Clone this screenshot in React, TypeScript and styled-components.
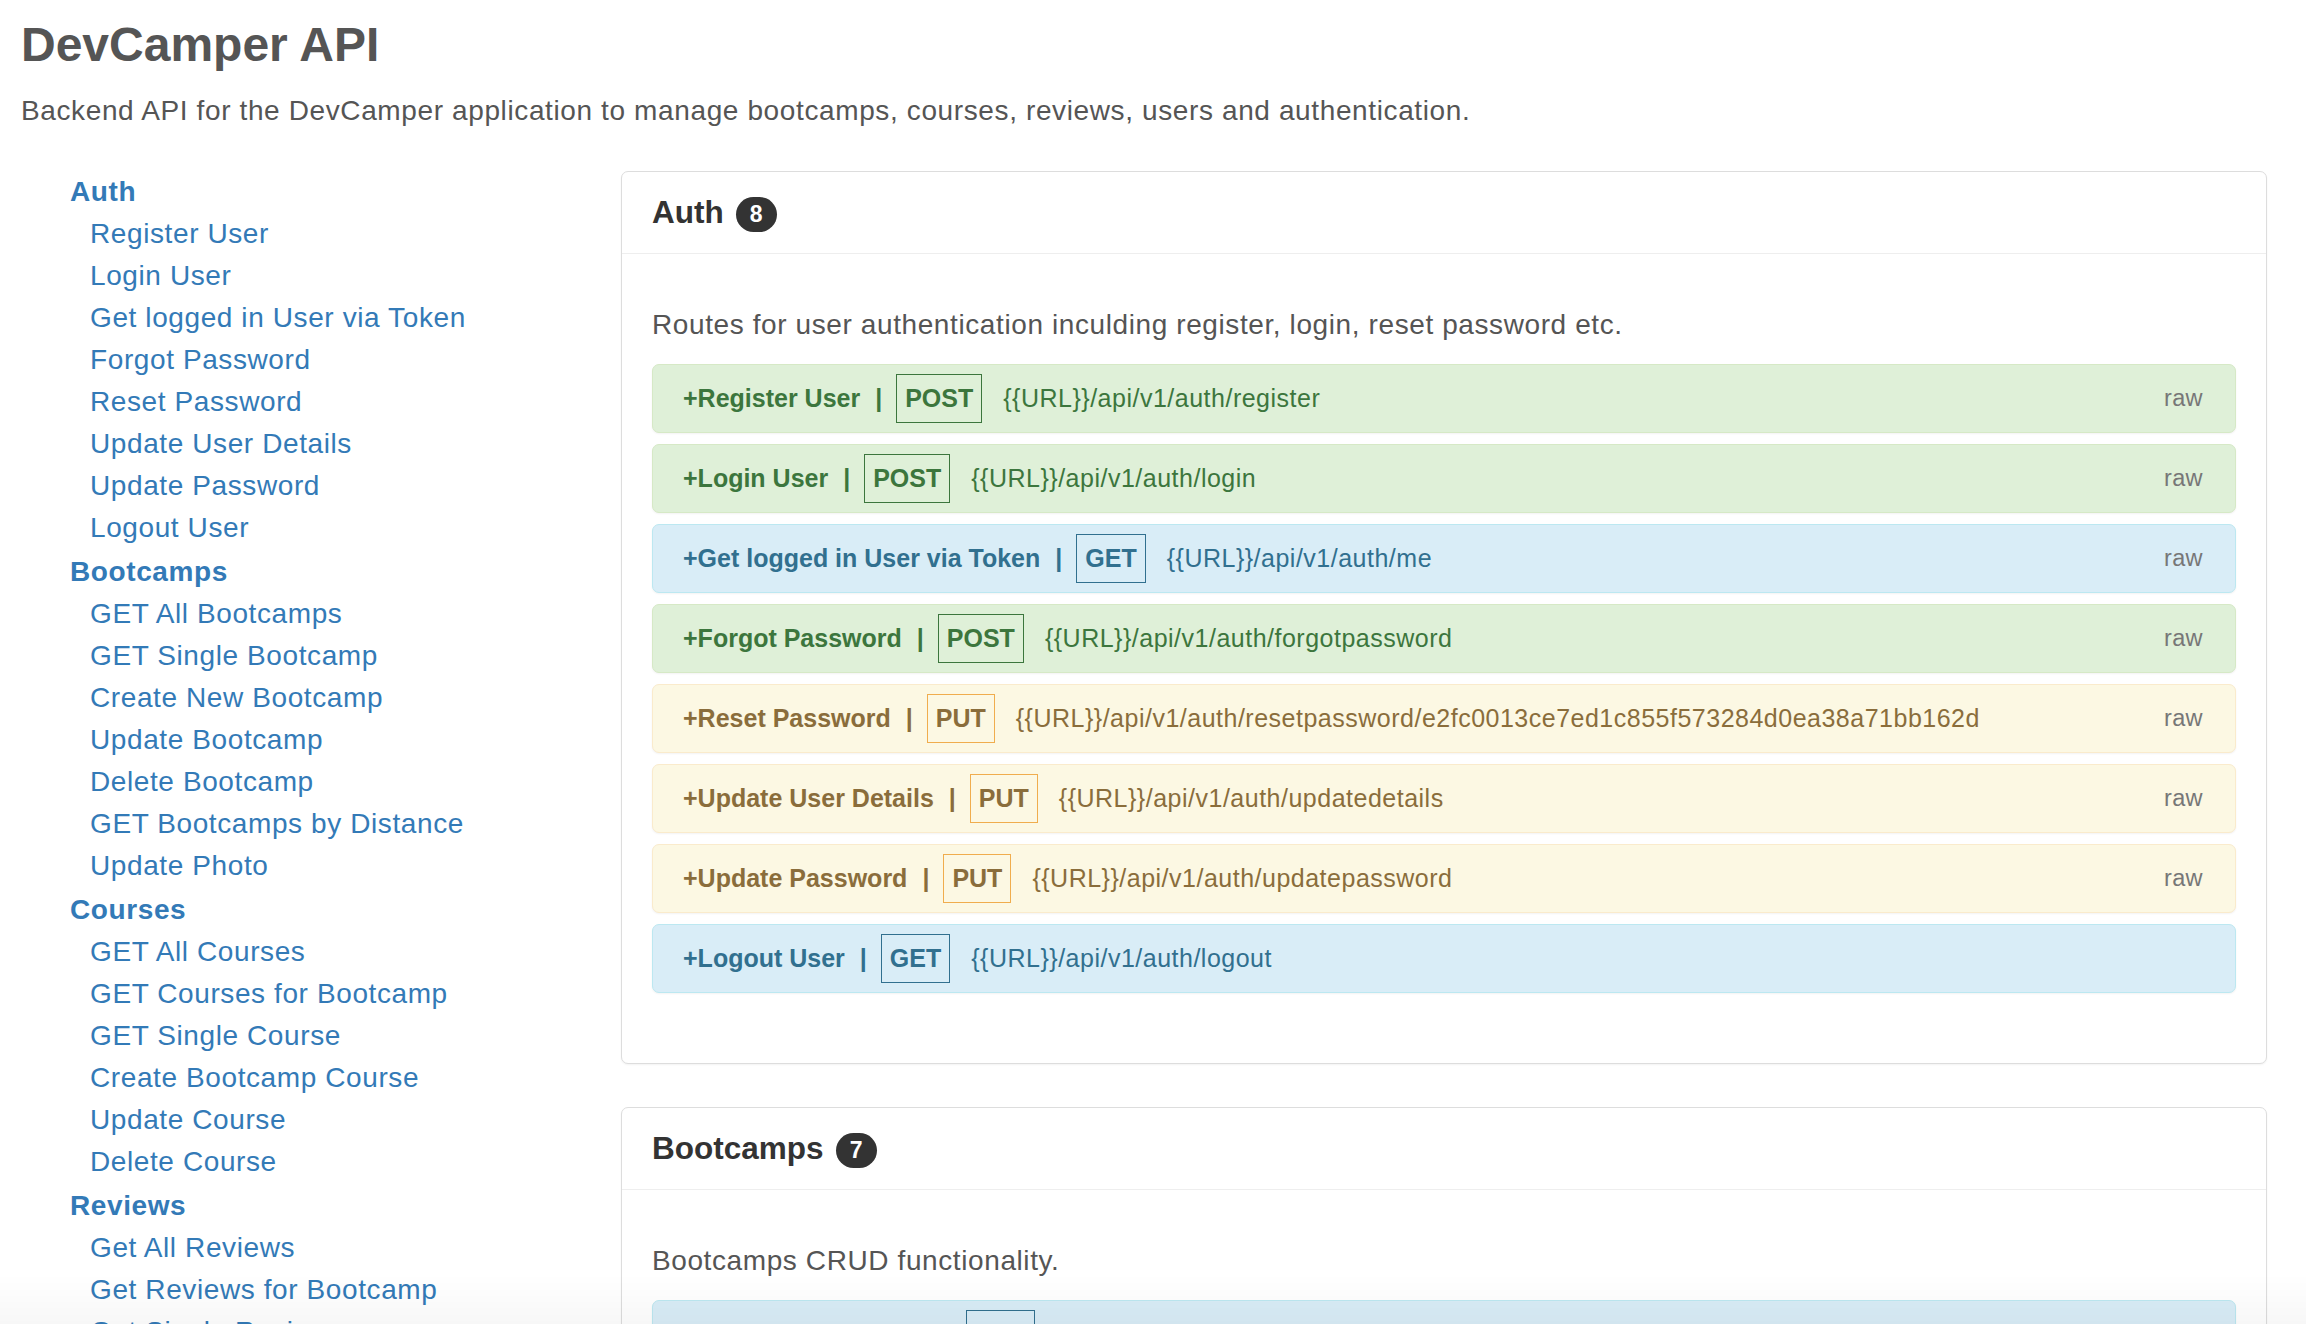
import React from 'react';
import styled, { createGlobalStyle } from 'styled-components';

type Method = 'GET' | 'POST' | 'PUT' | 'DELETE';

interface Endpoint {
  name: string;
  method: Method;
  url: string;
  raw?: boolean;
}

interface Section {
  title: string;
  description: string;
  endpoints: Endpoint[];
}

const sections: Section[] = [
  {
    title: 'Auth',
    description: 'Routes for user authentication inculding register, login, reset password etc.',
    endpoints: [
      { name: 'Register User', method: 'POST', url: '{{URL}}/api/v1/auth/register', raw: true },
      { name: 'Login User', method: 'POST', url: '{{URL}}/api/v1/auth/login', raw: true },
      { name: 'Get logged in User via Token', method: 'GET', url: '{{URL}}/api/v1/auth/me', raw: true },
      { name: 'Forgot Password', method: 'POST', url: '{{URL}}/api/v1/auth/forgotpassword', raw: true },
      {
        name: 'Reset Password',
        method: 'PUT',
        url: '{{URL}}/api/v1/auth/resetpassword/e2fc0013ce7ed1c855f573284d0ea38a71bb162d',
        raw: true,
      },
      { name: 'Update User Details', method: 'PUT', url: '{{URL}}/api/v1/auth/updatedetails', raw: true },
      { name: 'Update Password', method: 'PUT', url: '{{URL}}/api/v1/auth/updatepassword', raw: true },
      { name: 'Logout User', method: 'GET', url: '{{URL}}/api/v1/auth/logout' },
    ],
  },
  {
    title: 'Bootcamps',
    description: 'Bootcamps CRUD functionality.',
    endpoints: [
      { name: 'GET All Bootcamps', method: 'GET', url: '{{URL}}/api/v1/bootcamps' },
      { name: 'GET Single Bootcamp', method: 'GET', url: '{{URL}}/api/v1/bootcamps/5d725a1b7b292f5f8ceff788' },
      { name: 'Create New Bootcamp', method: 'POST', url: '{{URL}}/api/v1/bootcamps', raw: true },
      { name: 'Update Bootcamp', method: 'PUT', url: '{{URL}}/api/v1/bootcamps/5d725a1b7b292f5f8ceff788', raw: true },
      { name: 'Delete Bootcamp', method: 'DELETE', url: '{{URL}}/api/v1/bootcamps/5d725a1b7b292f5f8ceff788' },
      { name: 'GET Bootcamps by Distance', method: 'GET', url: '{{URL}}/api/v1/bootcamps/radius/02118/10' },
      { name: 'Update Photo', method: 'PUT', url: '{{URL}}/api/v1/bootcamps/5d725a1b7b292f5f8ceff788/photo' },
    ],
  },
];

const navGroups: { title: string; items: string[] }[] = [
  {
    title: 'Auth',
    items: [
      'Register User',
      'Login User',
      'Get logged in User via Token',
      'Forgot Password',
      'Reset Password',
      'Update User Details',
      'Update Password',
      'Logout User',
    ],
  },
  {
    title: 'Bootcamps',
    items: [
      'GET All Bootcamps',
      'GET Single Bootcamp',
      'Create New Bootcamp',
      'Update Bootcamp',
      'Delete Bootcamp',
      'GET Bootcamps by Distance',
      'Update Photo',
    ],
  },
  {
    title: 'Courses',
    items: [
      'GET All Courses',
      'GET Courses for Bootcamp',
      'GET Single Course',
      'Create Bootcamp Course',
      'Update Course',
      'Delete Course',
    ],
  },
  {
    title: 'Reviews',
    items: ['Get All Reviews', 'Get Reviews for Bootcamp', 'Get Single Review', 'Add Review', 'Update Review', 'Delete Review'],
  },
  {
    title: 'Users',
    items: ['Get All Users', 'Get Single User', 'Create User', 'Update User', 'Delete User'],
  },
];

const tones: Record<Method, { bg: string; border: string; text: string; box: string }> = {
  GET: { bg: '#d9edf7', border: '#bce8f1', text: '#31708f', box: '#31708f' },
  POST: { bg: '#dff0d8', border: '#d6e9c6', text: '#3c763d', box: '#3c763d' },
  PUT: { bg: '#fcf8e3', border: '#faebcc', text: '#8a6d3b', box: '#f0ad4e' },
  DELETE: { bg: '#f2dede', border: '#ebccd1', text: '#a94442', box: '#d9534f' },
};

const GlobalStyle = createGlobalStyle`
  html {
    overflow: hidden;
  }
  body {
    margin: 0;
    background: #fff;
    color: #333;
    font-family: "Liberation Sans", Arial, Helvetica, sans-serif;
  }
`;

const Page = styled.div`
  padding: 17px 39px 0 21px;
`;

const Title = styled.h1`
  margin: 0;
  font-size: 48px;
  line-height: 56px;
  font-weight: 700;
  color: #555;
`;

const Lead = styled.p`
  margin: 19px 0 0;
  font-size: 28px;
  letter-spacing: 0.62px;
  line-height: 37px;
  color: #555;
`;

const Layout = styled.div`
  display: grid;
  grid-template-columns: 600px minmax(0, 1fr);
  align-items: start;
  margin-top: 42px;
`;

const Nav = styled.nav`
  display: flex;
  flex-direction: column;
`;

const NavGroup = styled.div`
  display: flex;
  flex-direction: column;

  & + & {
    margin-top: 2px;
  }
`;

const NavLink = styled.a<{ $heading?: boolean }>`
  padding-left: ${({ $heading }) => ($heading ? '49px' : '69px')};
  font-size: 28px;
  letter-spacing: 0.6px;
  line-height: 42px;
  font-weight: ${({ $heading }) => ($heading ? 700 : 400)};
  color: #337ab7;
  text-decoration: none;
  white-space: nowrap;
`;

const Main = styled.main`
  display: flex;
  flex-direction: column;
  gap: 43px;
`;

const Panel = styled.section`
  border: 1px solid #ddd;
  border-radius: 7px;
  background: #fff;
  box-shadow: 0 1px 2px rgba(0, 0, 0, 0.05);
`;

const PanelHeader = styled.header`
  display: flex;
  align-items: center;
  height: 81px;
  padding: 0 30px;
  border-bottom: 1px solid #eee;
`;

const PanelTitle = styled.h2`
  margin: 0;
  font-size: 31.5px;
  line-height: 1.1;
  font-weight: 700;
  color: #333;
`;

const Badge = styled.span`
  display: inline-flex;
  align-items: center;
  justify-content: center;
  min-width: 41px;
  height: 35px;
  margin: 3px 0 0 12px;
  border-radius: 18px;
  background: #333;
  color: #fff;
  font-size: 23px;
  font-weight: 700;
`;

const PanelBody = styled.div`
  padding: 52px 30px 70px;
`;

const Description = styled.p`
  margin: 0 0 21px;
  font-size: 28px;
  letter-spacing: 0.6px;
  line-height: 37px;
  color: #555;
`;

const RouteList = styled.div`
  display: flex;
  flex-direction: column;
  gap: 11px;
`;

const RouteRow = styled.div<{ $method: Method }>`
  display: flex;
  align-items: center;
  box-sizing: border-box;
  height: 69px;
  padding: 0 32px 0 30px;
  border: 1px solid ${({ $method }) => tones[$method].border};
  border-radius: 7px;
  background: ${({ $method }) => tones[$method].bg};
  color: ${({ $method }) => tones[$method].text};
  box-shadow: 0 1px 2px rgba(0, 0, 0, 0.05);
  white-space: nowrap;
`;

const RouteName = styled.span`
  font-size: 25px;
  font-weight: 700;
`;

const Divider = styled.span`
  margin: 0 14px 0 15px;
  font-size: 25px;
  font-weight: 700;
`;

const MethodBox = styled.span<{ $method: Method }>`
  padding: 0 8px;
  border: 1px solid ${({ $method }) => tones[$method].box};
  font-size: 25px;
  font-weight: 700;
  line-height: 47px;
`;

const Url = styled.span`
  margin-left: 21px;
  font-size: 25px;
  letter-spacing: 0.5px;
`;

const Raw = styled.span`
  margin-left: auto;
  font-size: 23.5px;
  letter-spacing: 0.4px;
  color: #777;
`;

const BottomFade = styled.div`
  position: fixed;
  left: 0;
  right: 0;
  bottom: 0;
  height: 50px;
  pointer-events: none;
  background: linear-gradient(rgba(0, 0, 0, 0), rgba(0, 0, 0, 0.03));
`;

const Route = ({ endpoint }: { endpoint: Endpoint }) => (
  <RouteRow $method={endpoint.method}>
    <RouteName>+{endpoint.name}</RouteName>
    <Divider>|</Divider>
    <MethodBox $method={endpoint.method}>{endpoint.method}</MethodBox>
    <Url>{endpoint.url}</Url>
    {endpoint.raw && <Raw>raw</Raw>}
  </RouteRow>
);

const ApiPanel = ({ section }: { section: Section }) => (
  <Panel>
    <PanelHeader>
      <PanelTitle>{section.title}</PanelTitle>
      <Badge>{section.endpoints.length}</Badge>
    </PanelHeader>
    <PanelBody>
      <Description>{section.description}</Description>
      <RouteList>
        {section.endpoints.map((e) => (
          <Route key={e.name} endpoint={e} />
        ))}
      </RouteList>
    </PanelBody>
  </Panel>
);

const App = () => (
  <>
    <GlobalStyle />
    <Page>
      <Title>DevCamper API</Title>
      <Lead>
        Backend API for the DevCamper application to manage bootcamps, courses, reviews, users and authentication.
      </Lead>
      <Layout>
        <Nav>
          {navGroups.map((g) => (
            <NavGroup key={g.title}>
              <NavLink $heading href="#">
                {g.title}
              </NavLink>
              {g.items.map((item) => (
                <NavLink key={item} href="#">
                  {item}
                </NavLink>
              ))}
            </NavGroup>
          ))}
        </Nav>
        <Main>
          {sections.map((s) => (
            <ApiPanel key={s.title} section={s} />
          ))}
        </Main>
      </Layout>
    </Page>
    <BottomFade />
  </>
);

export default App;
